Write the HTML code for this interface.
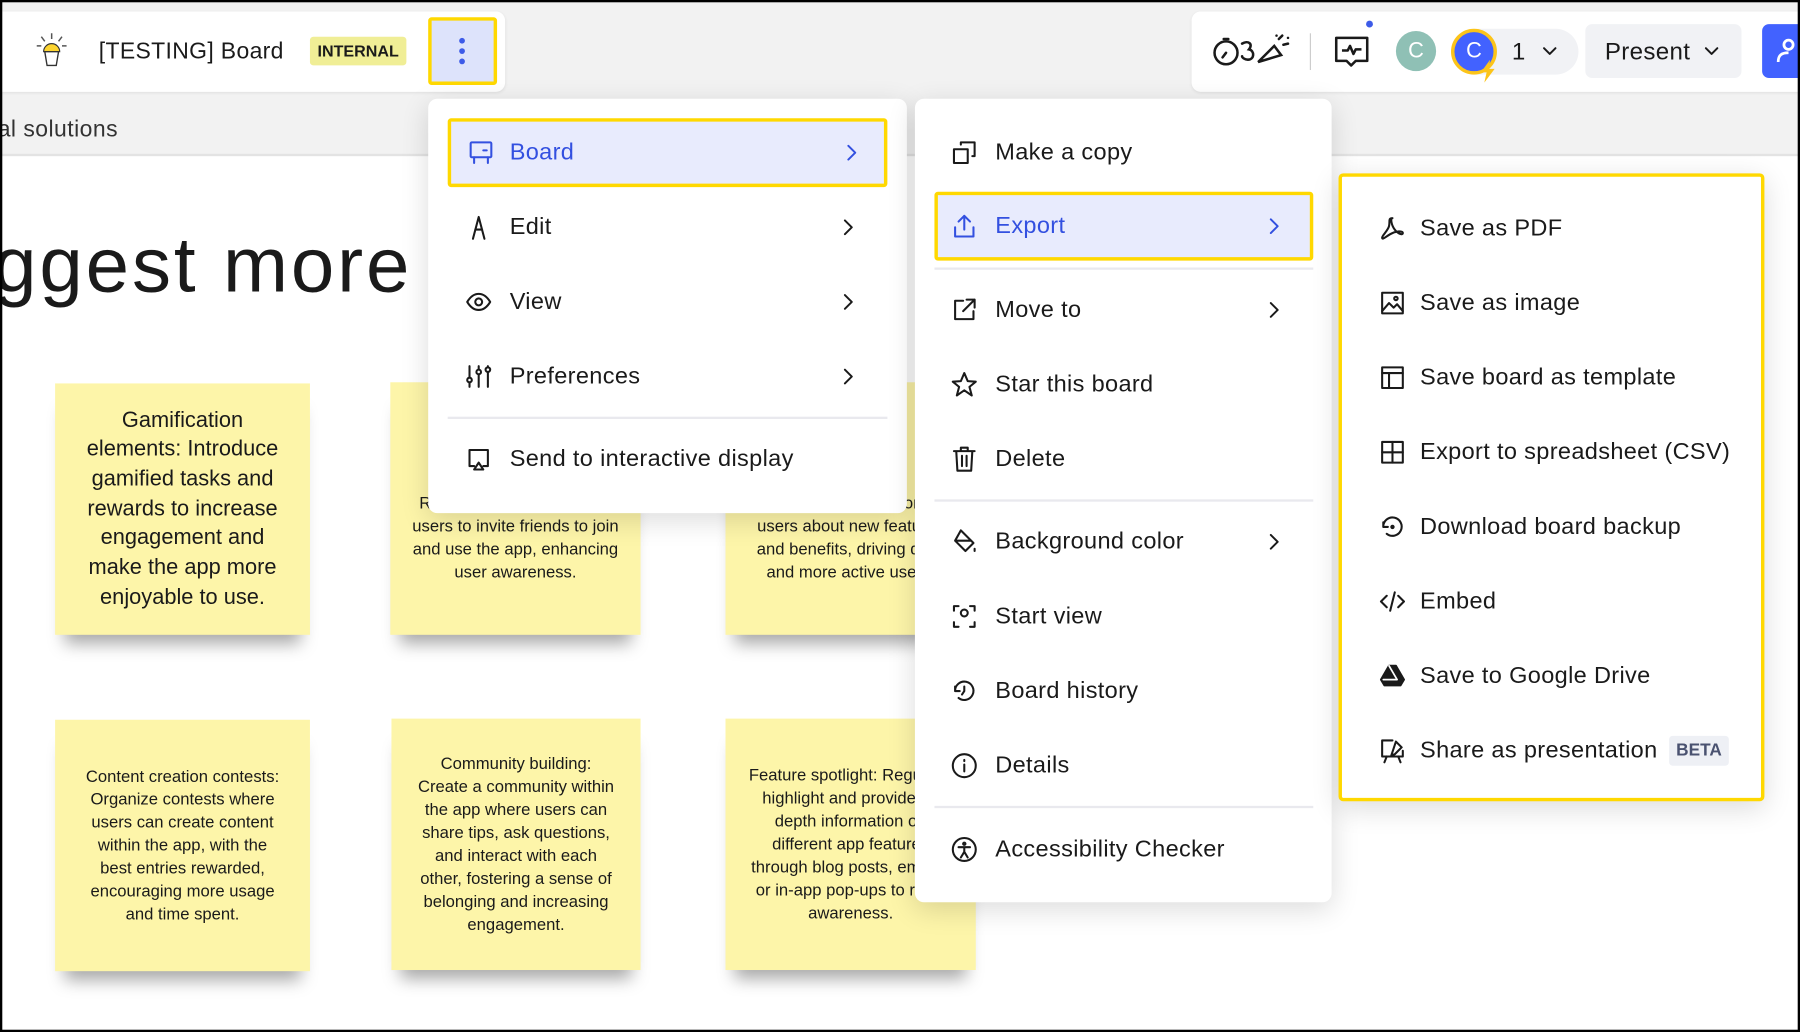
<!DOCTYPE html>
<html><head><meta charset="utf-8"><style>
*{margin:0;padding:0;box-sizing:border-box}
html,body{width:1800px;height:1032px;overflow:hidden;background:#000}
#w{position:absolute;left:0;top:0;width:1568px;height:899px;transform:scale(1.14796);transform-origin:0 0;background:#fff;font-family:"Liberation Sans",sans-serif;color:#1a1a1a;overflow:hidden}
.a{position:absolute}
.note{position:absolute;background:#fdf5a9;text-align:center;color:#1a1a1a;display:flex;align-items:center;justify-content:center;box-shadow:0 16px 14px -8px rgba(0,0,0,.35)}
.menu{position:absolute;background:#fff;border-radius:8px;box-shadow:0 6px 24px rgba(0,0,0,.14)}
.it{position:absolute;height:58px;display:flex;align-items:center;font-size:20.5px;letter-spacing:.3px;color:#1a1a1a}
.it svg{position:absolute;width:24px;height:24px;fill:none;stroke:#1a1a1a;stroke-width:1.8;stroke-linecap:round;stroke-linejoin:round}
.chev,.it svg.chev{position:absolute;width:12px;height:14px;fill:none;stroke:#1a1a1a;stroke-width:1.7;stroke-linecap:round;stroke-linejoin:round}
.div{position:absolute;height:2px;background:#e9e9ee}
.hl{background:#e8ebfd;border:3px solid #ffd800;border-radius:3px;color:#3350e0}
</style></head><body><div id="w">
<div class="a" style="left:0;top:0;width:1568px;height:136px;background:#f2f2f2;border-bottom:2px solid #e3e3e3"></div>
<div class="a" style="left:-2px;top:102px;font-size:20px;color:#333;letter-spacing:.4px">al solutions</div>
<div class="a" style="left:-6px;top:192px;font-size:68px;color:#1a1a1a;letter-spacing:2.5px">ggest more</div>

<div class="a" style="left:0;top:10px;width:440px;height:70px;background:#fff;border-radius:0 8px 8px 0;box-shadow:0 1px 3px rgba(0,0,0,.08)"></div>
<svg class="a" style="left:30px;top:27px" width="30" height="36" viewBox="0 0 30 36"><path d="M15 2v5M6 5l3 4M24 5l-3 4M2 13h4M24 13h4" stroke="#555" stroke-width="1.3"/><path d="M8 18a7 7 0 0 1 14 0z" fill="#fcd430" stroke="#333" stroke-width="1"/><path d="M9 18h12l-2 12h-8z" fill="#fff" stroke="#333" stroke-width="1.2"/></svg>
<div class="a" style="left:86px;top:34px;font-size:20px;letter-spacing:.3px">[TESTING] Board</div>
<div class="a" style="left:270px;top:32px;width:84px;height:25px;background:#f0ee96;border-radius:3px;font-size:14px;font-weight:bold;text-align:center;line-height:25px">INTERNAL</div>
<div class="a" style="left:373px;top:15px;width:60px;height:59px;background:#dde3fb;border:3px solid #ffd800;border-radius:3px"></div>
<div class="a" style="left:400px;top:33px;width:5px;height:5px;border-radius:50%;background:#3d5be8;box-shadow:0 9px 0 #3d5be8,0 18px 0 #3d5be8"></div>

<div class="a" style="left:1038px;top:10px;width:540px;height:70px;background:#fff;border-radius:8px;box-shadow:0 1px 3px rgba(0,0,0,.08)"></div>
<svg class="a" style="left:1056px;top:28px" width="70" height="32" viewBox="0 0 70 32" fill="none" stroke="#1a1a1a" stroke-width="2.2" stroke-linecap="round"><circle cx="12" cy="18" r="10"/><path d="M12 18l-3 4M10 6h4"/><path d="M26 10c5-3 10 0 6 5c5 1 5 9-1 9c-3 0-5-2-5-3"/><path d="M40 26l14-14 6 8z"/><path d="M58 6l3-3M62 11l4-1M56 3v0M66 5v0"/></svg>
<div class="a" style="left:1141px;top:29px;width:1px;height:32px;background:#ccc"></div>
<svg class="a" style="left:1161px;top:28px" width="34" height="34" viewBox="0 0 34 34" fill="none" stroke="#1a1a1a" stroke-width="2.2" stroke-linejoin="round"><path d="M3 5h27v20H20l-4 4-4-4H3z"/><path d="M8 16h5l2-4 3 7 2-4h5"/></svg>
<div class="a" style="left:1190px;top:18px;width:6px;height:6px;border-radius:50%;background:#3d5be8"></div>
<div class="a" style="left:1216px;top:27px;width:35px;height:35px;border-radius:50%;background:#8fc0b5;color:#fff;font-size:19px;text-align:center;line-height:35px">C</div>
<div class="a" style="left:1268px;top:25px;width:107px;height:40px;border-radius:20px;background:#f1f2f5"></div>
<div class="a" style="left:1264px;top:25px;width:40px;height:40px;border-radius:50%;background:#4262ff;border:3px solid #fcc419;color:#fff;font-size:19px;text-align:center;line-height:34px">C</div>
<svg class="a" style="left:1289px;top:52px" width="14" height="20" viewBox="0 0 14 20"><path d="M9 0L1 11h5l-2 9 9-12H8z" fill="#fcc419"/></svg>
<div class="a" style="left:1317px;top:34px;font-size:21px">1</div>
<svg class="chev" style="left:1343px;top:38px;width:14px" viewBox="0 0 14 14"><path d="M2 4l5 5 5-5"/></svg>
<div class="a" style="left:1381px;top:21px;width:136px;height:47px;border-radius:6px;background:#f1f2f5"></div>
<div class="a" style="left:1398px;top:34px;font-size:21px;letter-spacing:.3px">Present</div>
<svg class="chev" style="left:1484px;top:38px;width:14px" viewBox="0 0 14 14"><path d="M2 4l5 5 5-5"/></svg>
<div class="a" style="left:1535px;top:21px;width:40px;height:47px;border-radius:6px 0 0 6px;background:#4262ff"></div>
<svg class="a" style="left:1546px;top:32px" width="22" height="26" viewBox="0 0 22 26" fill="none" stroke="#fff" stroke-width="2.4"><circle cx="12" cy="7" r="4"/><path d="M3 22c0-6 3-8 9-8"/></svg>

<div class="note" style="left:48px;top:334px;width:222px;height:219px;font-size:19px;line-height:25.7px;padding:0 18px"><div>Gamification elements: Introduce gamified tasks and rewards to increase engagement and make the app more enjoyable to use.</div></div>
<div class="note" style="left:340px;top:333px;width:218px;height:220px;font-size:14.5px;line-height:20px;padding:0 16px"><div style="margin-top:52px">Referral program: Reward users to invite friends to join and use the app, enhancing user awareness.</div></div>
<div class="note" style="left:632px;top:333px;width:218px;height:220px;font-size:14.5px;line-height:20px;padding:0 22px"><div style="margin-top:52px">Users updates: Inform users about new features and benefits, driving daily and more active users.</div></div>
<div class="note" style="left:48px;top:627px;width:222px;height:219px;font-size:14.5px;line-height:20px;padding:0 26px"><div>Content creation contests: Organize contests where users can create content within the app, with the best entries rewarded, encouraging more usage and time spent.</div></div>
<div class="note" style="left:341px;top:626px;width:217px;height:219px;font-size:14.5px;line-height:20px;padding:0 22px"><div>Community building: Create a community within the app where users can share tips, ask questions, and interact with each other, fostering a sense of belonging and increasing engagement.</div></div>
<div class="note" style="left:632px;top:626px;width:218px;height:219px;font-size:14.5px;line-height:20px;padding:0 18px"><div>Feature spotlight: Regularly highlight and provide in-depth information on different app features through blog posts, emails, or in-app pop-ups to raise awareness.</div></div>

<div class="menu" style="left:373px;top:86px;width:417px;height:361px">
<div class="it hl" style="left:17px;top:17px;width:383px;height:60px"><svg style="left:14px;top:15px;stroke:#3350e0" viewBox="0 0 24 24"><rect x="3" y="3" width="18" height="13" rx="1"/><path d="M6 16v5M18 16v5M14 10h3"/></svg><span style="position:absolute;left:51px">Board</span><svg class="chev" style="left:343px;top:20px;stroke:#3350e0" viewBox="0 0 12 14"><path d="M3 1l6 6-6 6"/></svg></div>
<div class="it" style="left:20px;top:83px;width:380px"><svg style="left:12px;top:17px" viewBox="0 0 24 24"><path d="M7 22L12 3l5 19M9 14h6"/></svg><span style="position:absolute;left:51px">Edit</span><svg class="chev" style="left:340px;top:22px" viewBox="0 0 12 14"><path d="M3 1l6 6-6 6"/></svg></div>
<div class="it" style="left:20px;top:148px;width:380px"><svg style="left:12px;top:17px" viewBox="0 0 24 24"><path d="M2 12c3-5 6-7 10-7s7 2 10 7c-3 5-6 7-10 7s-7-2-10-7z"/><circle cx="12" cy="12" r="3"/></svg><span style="position:absolute;left:51px">View</span><svg class="chev" style="left:340px;top:22px" viewBox="0 0 12 14"><path d="M3 1l6 6-6 6"/></svg></div>
<div class="it" style="left:20px;top:213px;width:380px"><svg style="left:12px;top:17px" viewBox="0 0 24 24"><path d="M4 3v18M12 3v18M20 3v18"/><circle cx="4" cy="15" r="2" fill="#fff"/><circle cx="12" cy="8" r="2" fill="#fff"/><circle cx="20" cy="6" r="2" fill="#fff"/></svg><span style="position:absolute;left:51px">Preferences</span><svg class="chev" style="left:340px;top:22px" viewBox="0 0 12 14"><path d="M3 1l6 6-6 6"/></svg></div>
<div class="div" style="left:17px;top:277px;width:383px"></div>
<div class="it" style="left:20px;top:285px;width:380px"><svg style="left:12px;top:17px" viewBox="0 0 24 24"><path d="M8 18H4V4h16v14h-4"/><path d="M12 15l4 6H8z"/></svg><span style="position:absolute;left:51px">Send to interactive display</span></div>
</div>

<div class="menu" style="left:797px;top:86px;width:363px;height:700px">
<div class="it" style="left:20px;top:18px;width:330px"><svg style="left:11px;top:17px" viewBox="0 0 24 24"><rect x="3" y="9" width="12" height="12"/><path d="M9 5V3h12v12h-2"/></svg><span style="position:absolute;left:50px">Make a copy</span></div>
<div class="it hl" style="left:17px;top:81px;width:330px;height:60px"><svg style="left:11px;top:15px;stroke:#3350e0" viewBox="0 0 24 24"><path d="M12 15V3M7 8l5-5 5 5M4 13v8h16v-8"/></svg><span style="position:absolute;left:50px">Export</span><svg class="chev" style="left:287px;top:20px;stroke:#3350e0" viewBox="0 0 12 14"><path d="M3 1l6 6-6 6"/></svg></div>
<div class="div" style="left:17px;top:147px;width:330px"></div>
<div class="it" style="left:20px;top:155px;width:330px"><svg style="left:11px;top:17px" viewBox="0 0 24 24"><path d="M11 4H4v16h16v-7M14 3h7v7M21 3L11 13"/></svg><span style="position:absolute;left:50px">Move to</span><svg class="chev" style="left:287px;top:22px" viewBox="0 0 12 14"><path d="M3 1l6 6-6 6"/></svg></div>
<div class="it" style="left:20px;top:220px;width:330px"><svg style="left:11px;top:17px" viewBox="0 0 24 24"><path d="M12 2l3 7 7 .5-5.5 4.5 2 7.5L12 17l-6.5 4.5 2-7.5L2 9.5 9 9z"/></svg><span style="position:absolute;left:50px">Star this board</span></div>
<div class="it" style="left:20px;top:285px;width:330px"><svg style="left:11px;top:17px" viewBox="0 0 24 24"><path d="M3 5h18M9 5V2h6v3M5 5l1 17h12l1-17M10 9v9M14 9v9"/></svg><span style="position:absolute;left:50px">Delete</span></div>
<div class="div" style="left:17px;top:349px;width:330px"></div>
<div class="it" style="left:20px;top:357px;width:330px"><svg style="left:11px;top:17px" viewBox="0 0 24 24"><path d="M9 2l11 11-7 7-9-9zM4 11h14M21 18v2"/></svg><span style="position:absolute;left:50px">Background color</span><svg class="chev" style="left:287px;top:22px" viewBox="0 0 12 14"><path d="M3 1l6 6-6 6"/></svg></div>
<div class="it" style="left:20px;top:422px;width:330px"><svg style="left:11px;top:17px" viewBox="0 0 24 24"><path d="M3 7V3h4M21 7V3h-4M3 17v4h4M21 17v4h-4"/><circle cx="12" cy="9" r="3"/></svg><span style="position:absolute;left:50px">Start view</span></div>
<div class="it" style="left:20px;top:487px;width:330px"><svg style="left:11px;top:17px" viewBox="0 0 24 24"><path d="M4 12a8 8 0 1 1 3 6M4 8v4h4M12 8v4l-2 3"/></svg><span style="position:absolute;left:50px">Board history</span></div>
<div class="it" style="left:20px;top:552px;width:330px"><svg style="left:11px;top:17px" viewBox="0 0 24 24"><circle cx="12" cy="12" r="10"/><path d="M12 11v6M12 7v1"/></svg><span style="position:absolute;left:50px">Details</span></div>
<div class="div" style="left:17px;top:616px;width:330px"></div>
<div class="it" style="left:20px;top:625px;width:330px"><svg style="left:11px;top:17px" viewBox="0 0 24 24"><circle cx="12" cy="12" r="10"/><circle cx="12" cy="7" r="1"/><path d="M7 10h10M12 10v4l-3 5M12 14l3 5"/></svg><span style="position:absolute;left:50px">Accessibility Checker</span></div>
</div>

<div class="menu" style="left:1166px;top:151px;width:371px;height:547px;border:3px solid #ffd800;border-radius:4px">
<div class="it" style="left:20px;top:16px;width:330px"><svg style="left:12px;top:17px" viewBox="0 0 24 24"><path d="M12 3c-2 0-1 6 2 10s7 5 7 3-6-2-11 1-7 5-7 3 5-6 6-10-1-7 3-7"/></svg><span style="position:absolute;left:48px">Save as PDF</span></div>
<div class="it" style="left:20px;top:81px;width:330px"><svg style="left:12px;top:17px" viewBox="0 0 24 24"><rect x="3" y="3" width="18" height="18"/><path d="M3 19l6-7 4 4 3-3 5 6"/><circle cx="15" cy="8" r="1.5"/></svg><span style="position:absolute;left:48px">Save as image</span></div>
<div class="it" style="left:20px;top:146px;width:330px"><svg style="left:12px;top:17px" viewBox="0 0 24 24"><rect x="3" y="3" width="18" height="18"/><path d="M3 8h18M9 8v13"/></svg><span style="position:absolute;left:48px">Save board as template</span></div>
<div class="it" style="left:20px;top:211px;width:330px"><svg style="left:12px;top:17px" viewBox="0 0 24 24"><rect x="3" y="3" width="18" height="18"/><path d="M3 12h18M12 3v18"/></svg><span style="position:absolute;left:48px">Export to spreadsheet (CSV)</span></div>
<div class="it" style="left:20px;top:276px;width:330px"><svg style="left:12px;top:17px" viewBox="0 0 24 24"><path d="M4 12a8 8 0 1 1 3 6M4 8v4h4"/><circle cx="12" cy="12" r="1"/></svg><span style="position:absolute;left:48px">Download board backup</span></div>
<div class="it" style="left:20px;top:341px;width:330px"><svg style="left:12px;top:17px" viewBox="0 0 24 24"><path d="M7 7l-5 5 5 5M17 7l5 5-5 5M14 4l-4 16"/></svg><span style="position:absolute;left:48px">Embed</span></div>
<div class="it" style="left:20px;top:406px;width:330px"><svg style="left:12px;top:17px" viewBox="0 0 24 24"><path d="M9 3h6l7 12-3 5H5l-3-5z" fill="#1a1a1a"/><path d="M9 3l7 12H4" stroke="#fff" stroke-width="1.5"/></svg><span style="position:absolute;left:48px">Save to Google Drive</span></div>
<div class="it" style="left:20px;top:471px;width:340px"><svg style="left:12px;top:17px" viewBox="0 0 24 24"><path d="M12 3H3v14h18v-5M7 17l-2 5M17 17l2 5M15 4l5 5-6 6-3 1 1-3z"/></svg><span style="position:absolute;left:48px">Share as presentation</span><div style="position:absolute;left:265px;top:16px;width:52px;height:26px;background:#eef0f5;border-radius:3px;font-size:15px;font-weight:bold;color:#4a5270;text-align:center;line-height:26px;letter-spacing:0">BETA</div></div>
</div>

<div class="a" style="left:0;top:0;width:1568px;height:899px;border:2px solid #000;pointer-events:none"></div>
</div></body></html>
